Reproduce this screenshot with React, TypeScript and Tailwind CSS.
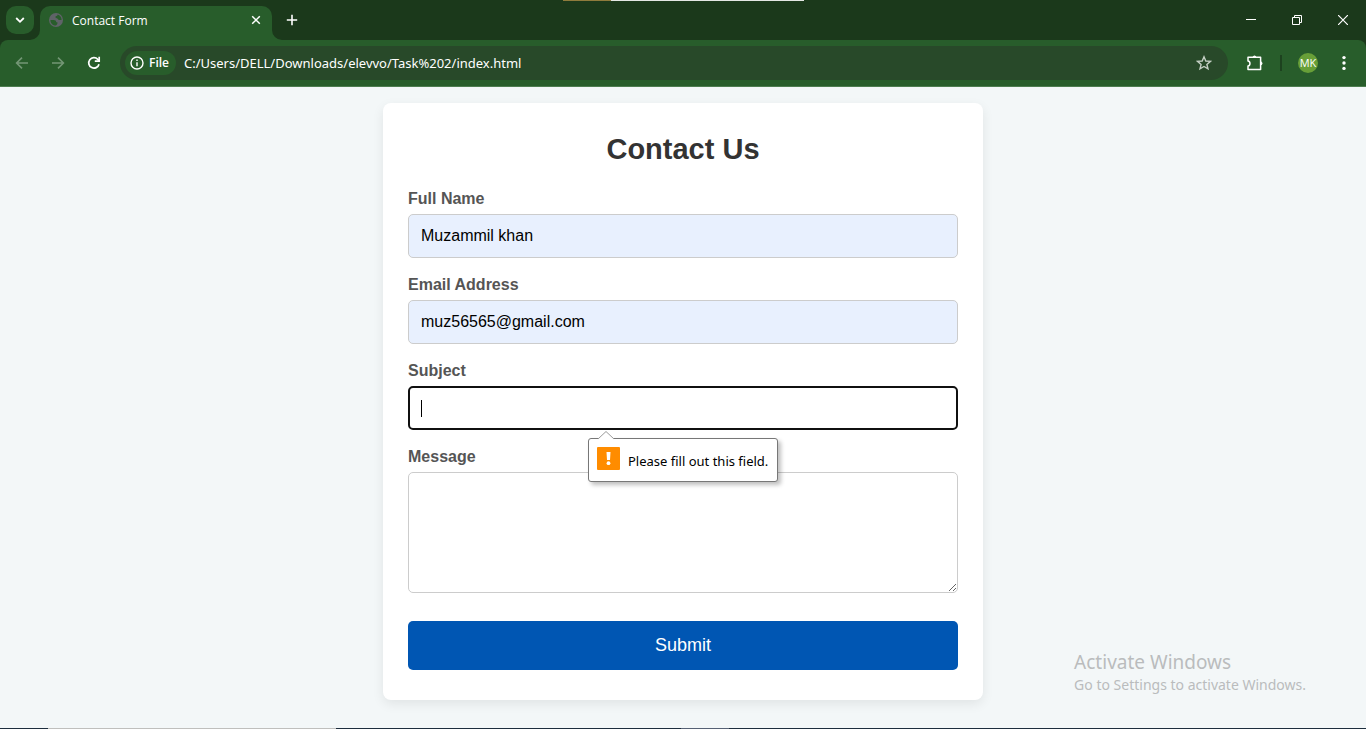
import React from "react";

const field =
  "block h-11 w-full rounded-[5px] border border-[#ccc] px-3 text-base text-black outline-none";
const label = "mb-1 block text-base leading-[22px] font-bold text-[#555]";

function TabStrip() {
  return (
    <header className="relative flex h-10 items-start bg-[#1b391b] text-white">
      <button
        type="button"
        aria-label="Search tabs"
        className="mt-[6px] ml-[6px] flex h-7 w-7 items-center justify-center rounded-[10px] bg-[#285d2b]"
      >
        <svg width="10" height="10" viewBox="0 0 10 10" fill="none" stroke="currentColor" strokeWidth="1.8">
          <path d="M1.2 3L5 6.8L8.8 3" />
        </svg>
      </button>
      <div className="relative mt-[6px] ml-[6px] flex h-[34px] w-[232px] items-center rounded-t-[10px] bg-[#285d2b] pr-[10px] pb-[6px] pl-2">
        <svg className="absolute bottom-0 -left-[10px]" width="10" height="10" viewBox="0 0 10 10">
          <path d="M10 0V10H0A10 10 0 0 0 10 0Z" fill="#285d2b" />
        </svg>
        <svg className="absolute -right-[10px] bottom-0" width="10" height="10" viewBox="0 0 10 10">
          <path d="M0 0V10H10A10 10 0 0 1 0 0Z" fill="#285d2b" />
        </svg>
        <svg width="16" height="16" viewBox="0 0 16 16">
          <circle cx="8" cy="8" r="7" fill="#5f6368" />
          <path
            d="M2.4 8H5.6C7.4 8 8.2 8.8 8.2 10.2H9.4V11.6C9.4 12.4 8.6 12.6 8 13.6C4.8 13.6 2.4 11.2 2.4 8Z"
            fill="#285d2b"
          />
          <path
            d="M9.6 2.6C9.6 3.8 8.8 4.2 7.6 4.2V5.6C7.6 6.4 8.4 6.4 9.2 6.4C10 6.4 10.2 8 11 8H13.6C13.6 5.4 12 3.4 9.6 2.6Z"
            fill="#285d2b"
          />
        </svg>
        <span className="ml-2 flex-1 pt-px text-xs">Contact Form</span>
        <button type="button" aria-label="Close tab" className="flex h-3 w-3 items-center justify-center">
          <svg width="10" height="10" viewBox="0 0 10 10" stroke="currentColor" strokeWidth="1.5">
            <path d="M1.2 1.2L8.8 8.8M8.8 1.2L1.2 8.8" />
          </svg>
        </button>
      </div>
      <button type="button" aria-label="New tab" className="mt-[14px] ml-[14px] flex h-3 w-3 items-center justify-center">
        <svg width="12" height="12" viewBox="0 0 12 12" stroke="currentColor" strokeWidth="1.6">
          <path d="M6 .8V11.2M.8 6H11.2" />
        </svg>
      </button>
      <div className="ml-auto flex h-10">
        <button type="button" aria-label="Minimize" className="flex w-[46px] items-center justify-center">
          <svg width="10" height="10" viewBox="0 0 10 10" stroke="currentColor">
            <path d="M0 4.5H10" />
          </svg>
        </button>
        <button type="button" aria-label="Restore" className="flex w-[46px] items-center justify-center">
          <svg width="10" height="10" viewBox="0 0 10 10" fill="none" stroke="currentColor">
            <path d="M.5 2.5H7.5V9.5H.5ZM2.5 2.5V.5H9.5V7.5H7.5" />
          </svg>
        </button>
        <button type="button" aria-label="Close" className="flex w-[46px] items-center justify-center">
          <svg width="10" height="10" viewBox="0 0 10 10" stroke="currentColor" strokeWidth="1.2">
            <path d="M0 0L10 10M10 0L0 10" />
          </svg>
        </button>
      </div>
      <div className="absolute top-0 left-[563px] flex h-px">
        <span className="w-12 bg-[#8f7b3c]" />
        <span className="w-[193px] bg-[#e4e8e4]" />
      </div>
    </header>
  );
}

function Toolbar() {
  return (
    <div className="bg-[#1b391b]">
      <nav className="flex h-[47px] items-center rounded-t-lg border-b border-[#4d7d50] bg-[#285d2b] pr-[14px] pl-[14px] text-white">
        <button type="button" aria-label="Back" className="flex w-4 justify-center text-[#739675]">
          <svg width="16" height="16" viewBox="0 0 16 16" fill="none" stroke="currentColor" strokeWidth="1.6">
            <path d="M14 8H3M8 2.6L2.6 8L8 13.4" />
          </svg>
        </button>
        <button type="button" aria-label="Forward" className="ml-5 flex w-4 justify-center text-[#739675]">
          <svg width="16" height="16" viewBox="0 0 16 16" fill="none" stroke="currentColor" strokeWidth="1.6">
            <path d="M2 8H13M8 2.6L13.4 8L8 13.4" />
          </svg>
        </button>
        <button type="button" aria-label="Reload" className="ml-5 flex w-4 justify-center">
          <svg width="16" height="16" viewBox="0 0 16 16" fill="none" stroke="currentColor" strokeWidth="1.7">
            <path d="M13 9.2A5.2 5.2 0 1 1 11.8 4.4L13 5.6" />
            <path d="M13.2 1.8V6.2H8.8" />
          </svg>
        </button>
        <div className="ml-[18px] flex h-[34px] flex-1 items-center rounded-full bg-[#284929] pr-4 pl-[5px]">
          <button
            type="button"
            className="flex h-6 w-[51px] shrink-0 items-center gap-[5px] rounded-full bg-[#285d2b] pl-[5px] text-xs font-semibold"
          >
            <svg width="14" height="14" viewBox="0 0 14 14" className="shrink-0" fill="none" stroke="currentColor" strokeWidth="1.4">
              <circle cx="7" cy="7" r="6" />
              <path d="M7 6.2V10.2M7 3.6V5" />
            </svg>
            File
          </button>
          <input
            aria-label="Address"
            readOnly
            value="C:/Users/DELL/Downloads/elevvo/Task%202/index.html"
            className="ml-2 h-6 min-w-0 flex-1 bg-transparent font-['Noto_Sans',sans-serif] text-[13px] outline-none"
          />
          <button type="button" aria-label="Bookmark" className="text-[#c4cfc4]">
            <svg width="16" height="16" viewBox="0 0 16 16" fill="none" stroke="currentColor" strokeWidth="1.4">
              <path d="M8 1.8L9.8 6L14.4 6.4L10.9 9.4L12 13.9L8 11.5L4 13.9L5.1 9.4L1.6 6.4L6.2 6Z" />
            </svg>
          </button>
        </div>
        <button type="button" aria-label="Extensions" className="ml-[18px]">
          <svg width="18" height="18" viewBox="0 0 18 18" fill="none" stroke="currentColor" strokeWidth="1.5" strokeLinejoin="round">
            <path d="M2 3.2H14.6V15.4H2V12C4.6 11.6 4.6 7.4 2 7Z" />
            <path d="M7 2.9A1.7 1.7 0 0 1 10 2.9ZM14.9 7.8A1.7 1.7 0 0 1 14.9 11Z" fill="currentColor" strokeWidth="1" />
          </svg>
        </button>
        <span className="ml-4 h-4 w-[2px] bg-[#1d421f]" />
        <button
          type="button"
          aria-label="Profile"
          className="ml-4 flex h-5 w-5 items-center justify-center rounded-full bg-[#689f38] text-[11px]"
        >
          MK
        </button>
        <button type="button" aria-label="Menu" className="ml-[18px] flex w-4 justify-center">
          <svg width="4" height="16" viewBox="0 0 4 16" fill="currentColor">
            <circle cx="2" cy="2.6" r="1.7" />
            <circle cx="2" cy="8" r="1.7" />
            <circle cx="2" cy="13.4" r="1.7" />
          </svg>
        </button>
      </nav>
    </div>
  );
}

function ValidationBubble() {
  return (
    <div
      role="alert"
      className="absolute top-[52px] left-[180px] z-10 flex h-11 w-[190px] items-start rounded-[3px] border border-[#777] bg-white pt-2 pr-1 pl-2 font-['Noto_Sans',sans-serif] text-[13px] whitespace-nowrap text-black shadow-[3px_3px_4px_rgba(0,0,0,0.25)]"
    >
      <svg className="absolute -top-2 left-[9px]" width="16" height="9" viewBox="0 0 16 9">
        <path d="M0 8L8 0L16 8V9H0Z" fill="white" />
        <path d="M0 8L8 .5L16 8" fill="none" stroke="#999" />
      </svg>
      <svg className="shrink-0" width="23" height="23" viewBox="0 0 23 23">
        <rect width="23" height="23" rx="1" fill="#ff8c00" />
        <path d="M9.5 5H13.5L13 13H10Z" fill="white" />
        <circle cx="11.5" cy="16.2" r="1.9" fill="white" />
      </svg>
      <span className="ml-2 leading-7">Please fill out this field.</span>
    </div>
  );
}

function ContactForm() {
  return (
    <form
      noValidate
      onSubmit={(e) => e.preventDefault()}
      className="mx-auto w-full max-w-[600px] rounded-lg bg-white px-[25px] py-[30px] shadow-[0_4px_12px_rgba(0,0,0,0.08)]"
    >
      <h1 className="mb-[23px] text-center text-[29px] leading-8 font-bold text-[#333]">Contact Us</h1>
      <div className="mb-4">
        <label htmlFor="name" className={label}>Full Name</label>
        <input id="name" type="text" defaultValue="Muzammil khan" className={`${field} bg-[#e8f0fe]`} />
      </div>
      <div className="mb-4">
        <label htmlFor="email" className={label}>Email Address</label>
        <input id="email" type="email" defaultValue="muz56565@gmail.com" className={`${field} bg-[#e8f0fe]`} />
      </div>
      <div className="mb-4">
        <label htmlFor="subject" className={label}>Subject</label>
        <div className="relative">
          <input
            id="subject"
            type="text"
            required
            className="block h-11 w-full rounded-[5px] border-2 border-[#101010] px-[11px] text-base text-black caret-transparent outline-none"
          />
          <span className="absolute top-[14px] left-[13px] h-[17px] w-px bg-black" />
          <ValidationBubble />
        </div>
      </div>
      <div className="mb-7">
        <label htmlFor="message" className={label}>Message</label>
        <textarea
          id="message"
          className="block h-[121px] w-full resize-y rounded-[5px] border border-[#ccc] p-3 text-base outline-none"
        />
      </div>
      <button type="submit" className="block h-[49px] w-full rounded-[5px] bg-[#0056b3] pb-[2px] text-lg text-white">
        Submit
      </button>
    </form>
  );
}

export default function App() {
  return (
    <div className="relative flex min-h-screen flex-col bg-[#f3f7f8] font-['Open_Sans','Noto_Sans',sans-serif]">
      <TabStrip />
      <Toolbar />
      <main className="flex-1 pt-4 pb-7 font-['Liberation_Sans',Arial,sans-serif]">
        <ContactForm />
      </main>
      <aside className="absolute right-[60px] bottom-[33px] font-['Noto_Sans',sans-serif] text-[#babcbd]">
        <p className="text-[19px] leading-6">Activate Windows</p>
        <p className="text-sm leading-[22px]">Go to Settings to activate Windows.</p>
      </aside>
      <footer className="flex h-px bg-[#1d2d3d]">
        <span className="ml-12 w-72 bg-[#bfbfbd]" />
        <span className="ml-[345px] w-12 bg-[#566174]" />
      </footer>
    </div>
  );
}
